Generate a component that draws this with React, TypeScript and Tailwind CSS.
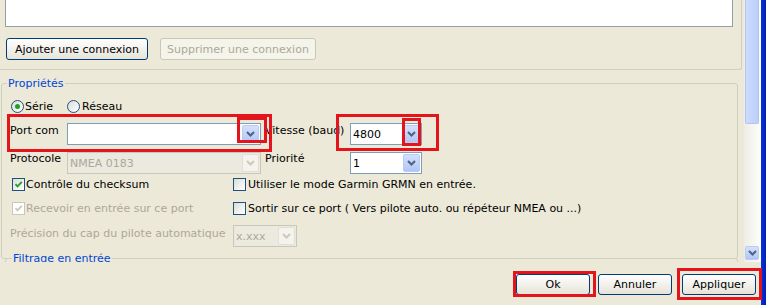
import React from 'react';

function Chevron({ color = '#4d6185' }: { color?: string }) {
  return (
    <svg width="9" height="6" viewBox="0 0 9 6">
      <path d="M1 1l3.5 3.5L8 1" fill="none" stroke={color} strokeWidth="2" />
    </svg>
  );
}

function DropButton({ disabled }: { disabled?: boolean }) {
  return (
    <div
      className={
        disabled
          ? 'flex h-full w-[17px] shrink-0 items-center justify-center rounded-[2px] border border-[#e2e0d4] bg-[#f4f3ee]'
          : 'flex h-full w-[17px] shrink-0 items-center justify-center rounded-[2px] border border-[#b9cbf3] bg-gradient-to-b from-[#d4e0fd] to-[#b2c6f5]'
      }
    >
      <Chevron color={disabled ? '#cbc9bc' : '#4d6185'} />
    </div>
  );
}

function Combo({ value, width, disabled }: { value?: string; width: string; disabled?: boolean }) {
  return (
    <div
      className={`flex h-[22px] shrink-0 border p-[1px] ${
        disabled ? 'border-[#c9c7ba] bg-[#ebeadf]' : 'border-[#7f9db9] bg-white'
      } ${width}`}
    >
      <span
        className={`flex flex-1 items-center pl-[1px] leading-[13px] ${
          disabled ? 'text-[#aca899]' : 'text-black'
        }`}
      >
        {value}
      </span>
      <DropButton disabled={disabled} />
    </div>
  );
}

function Checkbox({ checked, disabled }: { checked?: boolean; disabled?: boolean }) {
  return (
    <span
      className={`flex h-[13px] w-[13px] shrink-0 items-center justify-center border ${
        disabled ? 'border-[#cac8bb] bg-white' : 'border-[#1c5180] bg-gradient-to-br from-[#dcdcd7] to-white'
      }`}
    >
      {checked && (
        <svg width="9" height="9" viewBox="0 0 9 9">
          <path d="M1.5 4.2l2 2.2L7.8 1.8" fill="none" stroke={disabled ? '#cac8bb' : '#21a121'} strokeWidth="1.8" />
        </svg>
      )}
    </span>
  );
}

function Radio({ checked }: { checked?: boolean }) {
  return (
    <span className="flex h-[13px] w-[13px] shrink-0 items-center justify-center rounded-full border border-[#1c5180] bg-gradient-to-br from-[#dcdcd7] to-white">
      {checked && <span className="h-[5px] w-[5px] rounded-full bg-[#21a121]" />}
    </span>
  );
}

function XpButton({
  children,
  className,
  disabled,
}: {
  children: React.ReactNode;
  className: string;
  disabled?: boolean;
}) {
  return (
    <button
      className={`flex shrink-0 items-center justify-center rounded-[3px] border leading-[13px] ${
        disabled
          ? 'border-[#c9c7ba] bg-[#f5f4ea] text-[#aca899]'
          : 'border-[#003c74] bg-gradient-to-b from-white to-[#e6e3d8] text-black'
      } ${className}`}
    >
      {children}
    </button>
  );
}

export default function App() {
  return (
    <div className="relative flex h-[305px] w-[766px] overflow-hidden bg-[#ece9d8] font-['DejaVu_Sans',sans-serif] text-[11px] text-black">
      <div className="flex w-[761px] flex-col">
        <div className="flex h-[262px]">
          {/* scrolled area */}
          <div className="flex h-[262px] w-[744px] flex-col overflow-hidden">
            {/* connections group (top part scrolled away) */}
            <div className="h-[70px] w-[742px] shrink-0 rounded-br-[3px] border-b border-r border-[#d0d0bf]">
              <div className="ml-[5px] h-[27px] w-[728px] border-x border-b border-[#939fab] bg-white" />
              <div className="mt-[11px] flex pl-[6px]">
                <XpButton className="h-[22px] w-[142px]">Ajouter une connexion</XpButton>
                <XpButton disabled className="ml-[12px] h-[22px] w-[156px]">
                  Supprimer une connexion
                </XpButton>
              </div>
            </div>

            <fieldset className="ml-[1px] mt-[7px] w-[737px] shrink-0 rounded-[3px] border border-[#d0d0bf]">
              <legend className="ml-[5px] px-[1px] leading-[13px] text-[#0046d5]">Propriétés</legend>
              <div className="pb-[11px] pl-[8px]">
                <div className="mt-[10px] flex h-[13px] items-center pl-[1px]">
                  <Radio checked />
                  <span className="ml-[1px] leading-[13px]">Série</span>
                  <span className="ml-[14px]">
                    <Radio />
                  </span>
                  <span className="ml-[2px] leading-[13px]">Réseau</span>
                </div>

                <div className="mt-[10px] flex h-[22px] items-start">
                  <span className="mt-[1px] w-[57px] shrink-0 leading-[13px]">Port com</span>
                  <Combo width="w-[194px]" />
                  <span className="ml-[4px] mt-[1px] w-[85px] shrink-0 leading-[13px]">Vitesse (baud)</span>
                  <Combo width="w-[72px]" value="4800" />
                </div>

                <div className="mt-[7px] flex h-[22px] items-start">
                  <span className="w-[57px] shrink-0 leading-[13px]">Protocole</span>
                  <Combo width="w-[194px]" value="NMEA 0183" disabled />
                  <span className="ml-[4px] w-[85px] shrink-0 leading-[13px]">Priorité</span>
                  <Combo width="w-[72px]" value="1" />
                </div>

                <div className="mt-[4px] flex h-[13px] items-center">
                  <div className="flex w-[223px] shrink-0 items-center pl-[2px]">
                    <Checkbox checked />
                    <span className="ml-[1px] leading-[13px]">Contrôle du checksum</span>
                  </div>
                  <div className="flex items-center">
                    <Checkbox />
                    <span className="ml-[2px] leading-[13px]">Utiliser le mode Garmin GRMN en entrée.</span>
                  </div>
                </div>

                <div className="mt-[11px] flex h-[13px] items-center">
                  <div className="flex w-[223px] shrink-0 items-center pl-[2px]">
                    <Checkbox checked disabled />
                    <span className="ml-[1px] leading-[13px] text-[#aca899]">Recevoir en entrée sur ce port</span>
                  </div>
                  <div className="flex items-center">
                    <Checkbox />
                    <span className="ml-[2px] leading-[13px]">
                      Sortir sur ce port ( Vers pilote auto. ou répéteur NMEA ou ...)
                    </span>
                  </div>
                </div>

                <div className="mt-[10px] flex h-[22px] items-start">
                  <span className="mt-[2px] w-[223px] shrink-0 leading-[13px] text-[#aca899]">
                    Précision du cap du pilote automatique
                  </span>
                  <Combo width="w-[64px]" value="x.xxx" disabled />
                </div>
              </div>
            </fieldset>

            <fieldset className="-mt-[7px] ml-[5px] h-[40px] w-[733px] shrink-0 rounded-[3px] border border-[#d0d0bf]">
              <legend className="ml-[6px] bg-[#ece9d8] px-[1px] leading-[13px] text-[#0046d5]">Filtrage en entrée</legend>
            </fieldset>
          </div>

          {/* vertical scrollbar */}
          <div className="flex h-[262px] w-[17px] shrink-0 flex-col bg-gradient-to-r from-[#eeede5] to-[#fefefb]">
            <div className="ml-[1px] h-[124px] w-[14px] rounded-b-[2px] border border-t-0 border-[#b1c5f4] bg-gradient-to-r from-[#cddbfd] to-[#bccffa]" />
            <div className="flex-1" />
            <div className="mb-[2px] ml-[1px] flex h-[14px] w-[14px] items-center justify-center rounded-[2px] border border-[#b9cbf3] bg-gradient-to-b from-[#d4e0fd] to-[#b2c6f5]">
              <Chevron />
            </div>
          </div>
        </div>

        {/* dialog buttons */}
        <div className="flex flex-1 items-start justify-end pr-[5px] pt-[12px]">
          <XpButton className="h-[21px] w-[74px]">Ok</XpButton>
          <XpButton className="ml-[8px] h-[21px] w-[74px]">Annuler</XpButton>
          <XpButton className="ml-[10px] h-[21px] w-[74px]">Appliquer</XpButton>
        </div>
      </div>

      {/* window frame */}
      <div className="w-[5px] shrink-0 bg-gradient-to-r from-[#0a32dc] to-[#0020b8]" />

      {/* red annotation frames */}
      <div className="absolute left-[7px] top-[114px] h-[38px] w-[265px] border-[3px] border-[#e3141b]" />
      <div className="absolute left-[237px] top-[117px] h-[26px] w-[30px] border-[3px] border-[#e3141b]" />
      <div className="absolute left-[336px] top-[114px] h-[37px] w-[103px] border-[3px] border-[#e3141b]" />
      <div className="absolute left-[402px] top-[118px] h-[28px] w-[19px] border-[3px] border-[#e3141b]" />
      <div className="absolute left-[513px] top-[271px] h-[26px] w-[83px] border-[3px] border-[#e3141b]" />
      <div className="absolute left-[677px] top-[268px] h-[32px] w-[85px] border-[3px] border-[#e3141b]" />
    </div>
  );
}
